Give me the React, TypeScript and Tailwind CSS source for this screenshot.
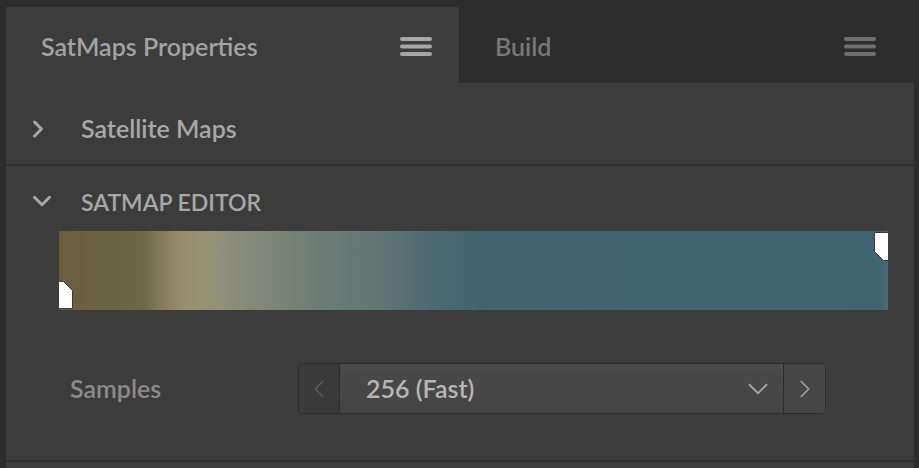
import { ChevronDown, ChevronLeft, ChevronRight } from "lucide-react";

/* ── hamburger icon ───────────────────────────── */
function MenuIcon({ color }: { color: string }) {
  return (
    <svg width="32" height="20" viewBox="0 0 32 20" fill="none">
      <path
        d="M2 2h28M2 9.5h28M2 17h28"
        stroke={color}
        strokeWidth="4"
        strokeLinecap="round"
      />
    </svg>
  );
}

/* ── range handles on the gradient ────────────── */
function HandleLow() {
  return (
    <svg width="15" height="28" viewBox="0 0 15 28">
      <path d="M0.5 1.5Q0.5 0.5 1.5 0.5L5.5 0.5L14.5 9.5L14.5 27.5L0.5 27.5Z" fill="#fff" stroke="#3a3a3a" strokeWidth="1" />
    </svg>
  );
}

function HandleHigh() {
  return (
    <svg width="15" height="29" viewBox="0 0 15 29">
      <path d="M0.5 0.5L14.5 0.5L14.5 28.5L9.5 28.5L0.5 19.5Z" fill="#fff" stroke="#3a3a3a" strokeWidth="1" />
    </svg>
  );
}

export default function App() {
  return (
    <div className="w-[919px] h-[468px] bg-[#2d2d2d] flex flex-col pt-[7px] pl-[6px] overflow-hidden font-['Lato',sans-serif] font-semibold">
      {/* ── TABS ─────────────────────────────────── */}
      <div className="h-[76px] flex shrink-0">
        <div className="w-[453px] bg-[#3c3c3c] flex items-center justify-between pl-[35px] pr-[27px] pt-[4px]">
          <span className="text-[25px] text-[#a3a3a3]">SatMaps Properties</span>
          <MenuIcon color="#a6a6a6" />
        </div>
        <div className="flex-1 flex items-center justify-between pl-[36px] pr-[43px] pt-[4px]">
          <span className="text-[25px] text-[#787878]">Build</span>
          <MenuIcon color="#6f6f6f" />
        </div>
      </div>

      {/* ── PANEL ────────────────────────────────── */}
      <div className="w-[908px] flex-1 bg-[#3c3c3c] flex flex-col">
        <div className="h-[83px] flex items-center pl-[18px] pt-[10px] border-b-2 border-[#2e2e2e]">
          <ChevronRight size={28} strokeWidth={2.6} color="#a8a8a8" />
          <span className="ml-[29px] text-[25px] text-[#a8a8a8]">Satellite Maps</span>
        </div>

        <div className="flex flex-col h-[296px] border-b-2 border-[#2e2e2e]">
          <div className="h-[65px] flex items-center pl-[21px] pt-[8px]">
            <ChevronDown size={30} strokeWidth={2.4} color="#a8a8a8" className="-mt-[4px]" />
            <span className="ml-[24px] text-[23px] text-[#a8a8a8]">SATMAP EDITOR</span>
          </div>

          <div className="relative ml-[53px] w-[829px] h-[79px] bg-[linear-gradient(to_right,#6b5a36_0%,#6b5f3e_0.7%,#6a6342_5%,#6b6445_8.6%,#6f6849_10.4%,#857d5e_12.5%,#948c6c_14.5%,#979274_17%,#8e8f7b_20%,#858a7b_23%,#7b8478_26.5%,#707e76_30%,#687a75_34%,#627673_38%,#5c7272_40.5%,#536d72_43%,#4a6870_46%,#43646f_51%,#426571_65%,#406472_99%,#4c6b77_100%)]">
            <div className="absolute left-[-1px] bottom-[1px] flex">
              <HandleLow />
            </div>
            <div className="absolute right-[-1px] top-[1px] flex">
              <HandleHigh />
            </div>
          </div>

          <div className="flex items-center mt-[53px] pl-[64px]">
            <span className="w-[228px] text-[25px] text-[#8c8c8c]">Samples</span>
            <div className="flex h-[51px] w-[528px] border border-[#2c2c2c] rounded-[4px] overflow-hidden">
              <div className="w-[41px] bg-[#3a3a3a] flex items-center justify-center border-r border-[#2c2c2c]">
                <ChevronLeft size={30} strokeWidth={1.3} color="#5c5c5c" />
              </div>
              <div className="flex-1 bg-[linear-gradient(to_bottom,#4a4a4a,#444444)] flex items-center justify-between pl-[26px] pr-[8px] border-r border-[#2c2c2c]">
                <span className="text-[25px] text-[#b6b6b6]">256 (Fast)</span>
                <ChevronDown size={34} strokeWidth={1.3} color="#a5a5a5" />
              </div>
              <div className="w-[41px] bg-[#464646] flex items-center justify-center">
                <ChevronRight size={30} strokeWidth={1.4} color="#a0a0a0" />
              </div>
            </div>
          </div>
        </div>
      </div>
    </div>
  );
}
